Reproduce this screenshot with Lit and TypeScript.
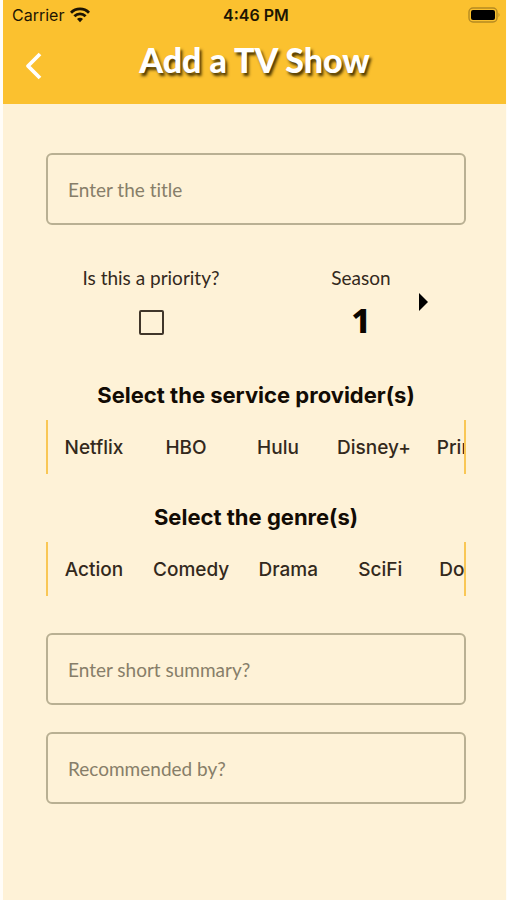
import { LitElement, html, css } from "lit";
import { customElement, property, state } from "lit/decorators.js";

@customElement("choice-strip")
class ChoiceStrip extends LitElement {
  @property() heading = "";
  @property({ attribute: false }) options: string[] = [];
  @state() private chosen: string[] = [];

  static styles = css`
    :host {
      display: block;
    }
    .heading {
      margin: 0 0 12px;
      font: 700 22px/26px Inter, sans-serif;
      text-align: center;
      color: #120b04;
    }
    .strip {
      display: flex;
      overflow-x: auto;
      scrollbar-width: none;
      border: solid #f9c755;
      border-width: 0 2px;
    }
    .option {
      flex: none;
      min-width: 92px;
      height: 54px;
      padding: 2px 13px 0;
      border: 0;
      background: none;
      font: 500 19px/24px Inter, sans-serif;
      color: #33291c;
      text-align: center;
    }
    .option[aria-pressed="true"] {
      background: #fbc12f;
    }
  `;

  private toggle(name: string) {
    this.chosen = this.chosen.includes(name)
      ? this.chosen.filter((n) => n !== name)
      : [...this.chosen, name];
  }

  render() {
    return html`
      <h2 class="heading" id="heading">${this.heading}</h2>
      <div class="strip" role="group" aria-labelledby="heading">
        ${this.options.map(
          (name) => html`<button
            class="option"
            type="button"
            aria-pressed=${this.chosen.includes(name) ? "true" : "false"}
            @click=${() => this.toggle(name)}
          >${name}</button>`
        )}
      </div>
    `;
  }
}

@customElement("app-root")
class AppRoot extends LitElement {
  @state() private season = 1;

  static styles = css`
    :host {
      display: block;
      min-height: 100vh;
      box-sizing: border-box;
      padding: 0 1px 0 3px;
      background: #fffdf8;
      font-family: Lato, sans-serif;
      color: #33291c;
    }
    .screen {
      min-height: 100vh;
      background: #fef2d7;
    }
    .top {
      height: 104px;
      background: #fbc12f;
    }
    .status {
      display: grid;
      grid-template-columns: 1fr auto 1fr;
      align-items: center;
      height: 30px;
      padding: 0 6px 0 9px;
      font: 500 16px/20px Inter, sans-serif;
      color: #1d1503;
    }
    .carrier {
      display: flex;
      align-items: center;
      gap: 6px;
      font-weight: 400;
    }
    .clock {
      font-weight: 600;
    }
    .battery {
      justify-self: end;
    }
    .bar {
      display: grid;
      grid-template-columns: 60px 1fr 60px;
      align-items: center;
      height: 60px;
    }
    .back {
      display: flex;
      justify-content: center;
      padding: 18px 8px 6px;
      border: 0;
      background: none;
    }
    .title {
      margin: 0;
      font: 900 34px/40px Lato, sans-serif;
      text-align: center;
      color: #fff;
      text-shadow: 2px 3px 3px #4a3500;
    }
    .form {
      display: flex;
      flex-direction: column;
      padding: 49px 40px 48px 43px;
    }
    .field {
      box-sizing: border-box;
      width: 100%;
      height: 72px;
      padding: 0 20px;
      border: 2px solid #b9b093;
      border-radius: 6px;
      background: none;
      font: 400 19px/24px Lato, sans-serif;
      font-variant-ligatures: none;
      color: #33291c;
    }
    .field::placeholder {
      color: #877e69;
      opacity: 1;
    }
    .pair {
      display: grid;
      grid-template-columns: 1fr 1fr;
      margin: 41px 0 44px;
    }
    .priority {
      display: flex;
      flex-direction: column;
      align-items: center;
      gap: 20px;
      font-size: 19px;
      line-height: 24px;
    }
    .tick {
      appearance: none;
      box-sizing: border-box;
      width: 25px;
      height: 25px;
      margin: 0;
      border: 2px solid #40362a;
      border-radius: 2px;
    }
    .tick:checked {
      background: #fbc12f;
    }
    .season {
      display: grid;
      grid-template-columns: 1fr auto 1fr;
      align-items: center;
    }
    .count {
      grid-column: 2;
      display: flex;
      flex-direction: column;
      align-items: center;
      gap: 12px;
      font-size: 19px;
      line-height: 24px;
    }
    .number {
      font: 800 34px/36px "Noto Sans", sans-serif;
      color: #0b0600;
    }
    .next {
      justify-self: start;
      display: flex;
      margin-left: 20px;
      padding: 8px;
      border: 0;
      background: none;
    }
    .strips {
      display: flex;
      flex-direction: column;
      gap: 30px;
      margin-bottom: 37px;
    }
    .notes {
      display: flex;
      flex-direction: column;
      gap: 27px;
    }
  `;

  render() {
    return html`
      <div class="screen">
        <header class="top">
          <div class="status">
            <span class="carrier">
              Carrier
              <svg width="20" height="16" viewBox="0 0 20 16" fill="none" stroke="#1d1503" stroke-width="2.8" aria-hidden="true">
                <path d="M1 5.7a12.6 12.6 0 0 1 18 0" />
                <path d="M4.4 9.3a7.8 7.8 0 0 1 11.2 0" />
                <path d="M10 15.2l-3-3.2a4.2 4.2 0 0 1 6 0z" fill="#1d1503" stroke="none" />
              </svg>
            </span>
            <span class="clock">4:46 PM</span>
            <svg class="battery" width="33" height="16" viewBox="0 0 33 16" aria-hidden="true">
              <rect x="2" y="1" width="28" height="14" rx="4" fill="none" stroke="#b58a22" stroke-width="1.4" />
              <rect x="4" y="3" width="24" height="10" rx="2" fill="#000" />
              <path d="M31.5 5.8q2 2.2 0 4.4z" fill="#b58a22" />
            </svg>
          </div>
          <div class="bar">
            <button class="back" type="button" aria-label="Back">
              <svg width="18" height="28" viewBox="0 0 18 28" fill="none" stroke="#fff" stroke-width="3.8" stroke-linejoin="round">
                <path d="M16 2L4 14l12 12" />
              </svg>
            </button>
            <h1 class="title">Add a TV Show</h1>
          </div>
        </header>
        <form class="form">
          <input class="field" type="text" placeholder="Enter the title" aria-label="Enter the title" />
          <div class="pair">
            <label class="priority">
              Is this a priority?
              <input class="tick" type="checkbox" />
            </label>
            <div class="season">
              <div class="count">
                <span>Season</span>
                <output class="number">${this.season}</output>
              </div>
              <button class="next" type="button" aria-label="Next season" @click=${() => this.season++}>
                <svg width="10" height="18" viewBox="0 0 10 18"><path d="M0 0l9 9-9 9z" fill="#000" /></svg>
              </button>
            </div>
          </div>
          <div class="strips">
            <choice-strip
              heading="Select the service provider(s)"
              .options=${["Netflix", "HBO", "Hulu", "Disney+", "Prime Video"]}
            ></choice-strip>
            <choice-strip
              heading="Select the genre(s)"
              .options=${["Action", "Comedy", "Drama", "SciFi", "Documentary"]}
            ></choice-strip>
          </div>
          <div class="notes">
            <input class="field" type="text" placeholder="Enter short summary?" aria-label="Enter short summary?" />
            <input class="field" type="text" placeholder="Recommended by?" aria-label="Recommended by?" />
          </div>
        </form>
      </div>
    `;
  }
}
